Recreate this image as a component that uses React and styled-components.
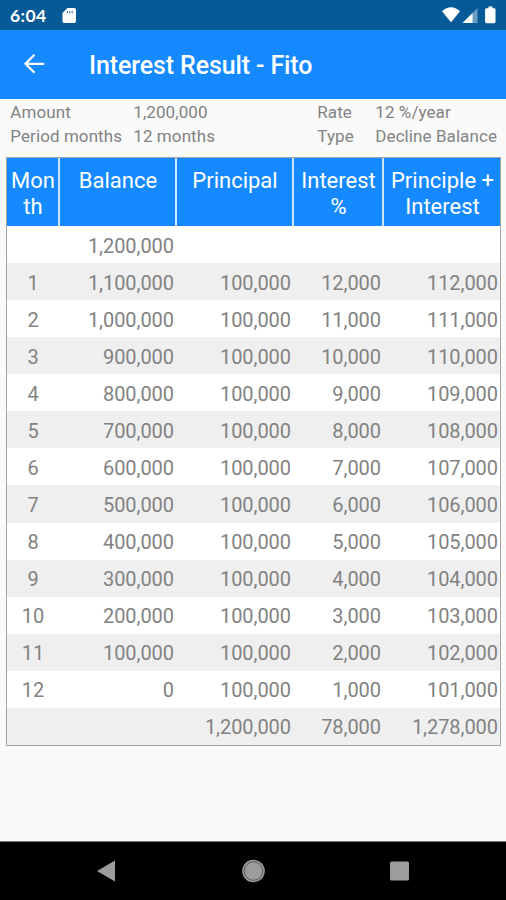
import React from 'react';
import styled, { createGlobalStyle } from 'styled-components';

const GlobalStyle = createGlobalStyle`
  * {
    box-sizing: border-box;
  }

  body {
    margin: 0;
    background-color: #fafafa;
    font-family: Roboto, sans-serif;
  }
`;

const Screen = styled.div`
  display: flex;
  flex-direction: column;
  width: 506px;
  height: 900px;
  overflow: hidden;
  background-color: #fafafa;
`;

const StatusBar = styled.div`
  display: flex;
  align-items: center;
  height: 30px;
  flex-shrink: 0;
  padding: 0 8px 0 10px;
  background-color: #075a98;
  color: #fff;

  svg {
    display: block;
    fill: #fff;
  }
`;

const Clock = styled.span`
  width: 52px;
  padding-top: 1px;
  font-family: Lato, sans-serif;
  font-size: 17.5px;
  font-weight: 700;
  line-height: 20px;
  letter-spacing: 0.4px;
`;

const StatusIcons = styled.div`
  display: flex;
  align-items: center;
  margin-left: auto;
`;

const AppBar = styled.header`
  display: flex;
  align-items: center;
  height: 68.5px;
  flex-shrink: 0;
  padding: 0 22px;
  background-color: #1589ff;
  color: #fff;
`;

const BackButton = styled.button`
  display: flex;
  width: 67px;
  padding: 0;
  border: 0;
  background: none;
  color: inherit;
`;

const Title = styled.h1`
  margin: 0;
  padding-top: 4px;
  font-size: 25px;
  font-weight: 500;
  line-height: 30px;
  letter-spacing: -0.12px;
  white-space: nowrap;
`;

const Summary = styled.dl`
  display: grid;
  grid-template-columns: 123px 184px 58px 1fr;
  grid-auto-rows: 24px;
  height: 58.5px;
  flex-shrink: 0;
  margin: 0;
  padding: 1px 0 0 10.3px;
  color: #828282;
  font-size: 17px;
  line-height: 24px;
  letter-spacing: 0.08px;
  white-space: nowrap;

  dt,
  dd {
    margin: 0;
  }
`;

const Table = styled.div`
  width: 495px;
  height: 589px;
  flex-shrink: 0;
  margin-left: 6px;
  border: 1px solid #a3a3a3;
  background-color: #fff;
`;

const columns = '53px 117px 117px 90px 116px';

const HeaderRow = styled.div`
  display: grid;
  grid-template-columns: ${columns};
  height: 68px;
  background-color: #1589ff;
`;

const HeaderCell = styled.div`
  padding: 10px 0 0 1px;
  border-right: ${({ $last }) => ($last ? '0' : '2px solid #cde4ff')};
  color: #fff;
  font-size: 22px;
  line-height: 26px;
  text-align: center;
  word-break: ${({ $split }) => ($split ? 'break-all' : 'normal')};
`;

const Row = styled.div`
  display: grid;
  grid-template-columns: ${columns};
  align-items: center;
  height: 37.07px;
  padding-top: 2px;
  background-color: ${({ $striped }) => ($striped ? '#efefef' : '#fff')};
`;

const Cell = styled.div`
  padding-right: ${({ $center, $last }) => ($center ? '1px' : $last ? '2px' : '3px')};
  color: #828282;
  font-size: 20px;
  line-height: 24px;
  letter-spacing: -0.05px;
  text-align: ${({ $center }) => ($center ? 'center' : 'right')};
`;

const NavBar = styled.nav`
  display: flex;
  align-items: center;
  justify-content: space-between;
  height: 59px;
  flex-shrink: 0;
  margin-top: auto;
  padding: 0 96px;
  border-top: 1px solid #777;
  background-color: #000;

  svg {
    display: block;
    fill: #9c9c9c;
  }
`;

const headers = ['Month', 'Balance', 'Principal', 'Interest %', 'Principle + Interest'];

const format = value => value.toLocaleString('en-US');

const AMOUNT = 1200000;
const MONTHS = 12;
const payment = AMOUNT / MONTHS;

const schedule = Array.from({ length: MONTHS }, (_, i) => {
  const interest = (AMOUNT - payment * i) * 0.01;
  return [
    i + 1,
    format(AMOUNT - payment * (i + 1)),
    format(payment),
    format(interest),
    format(payment + interest),
  ];
});

const rows = [
  ['', format(AMOUNT), '', '', ''],
  ...schedule,
  ['', '', format(AMOUNT), '78,000', '1,278,000'],
];

const App = () => (
  <>
    <GlobalStyle />
    <Screen>
      <StatusBar>
        <Clock>6:04</Clock>
        <svg width="15" height="17" viewBox="0 0 15 17">
          <path
            fillRule="evenodd"
            d="M5.5 1H12.3Q14 1 14 2.6V14.2Q14 16 12.3 16H2.3Q.5 16 .5 14.2V6ZM4.9 4v2.2h.9V4ZM7.3 4v2.2h.9V4ZM9.7 4v2.2h.9V4Z"
          />
        </svg>
        <StatusIcons>
          <svg width="58" height="20" viewBox="0 0 58 20">
            <path d="M2 6.2Q11 -1.8 20 6.2L11 17.3Z" />
            <path d="M22.5 18 37.5 3V18Z" opacity="0.4" />
            <path d="M22.5 18 32.5 8V18Z" />
            <path d="M48.5 1.5h4v1.7h1.6q1.4 0 1.4 1.4V16.5q0 1.7-1.4 1.7h-7.6q-1.4 0-1.4-1.7V4.6q0-1.4 1.4-1.4h2Z" />
          </svg>
        </StatusIcons>
      </StatusBar>

      <AppBar>
        <BackButton aria-label="Back">
          <svg
            width="24"
            height="24"
            viewBox="0 0 24 24"
            fill="none"
            stroke="currentColor"
            strokeWidth="2.2">
            <path d="M22.2 11.8H3.7M12.5 2.8 3.5 11.8l9 9" />
          </svg>
        </BackButton>
        <Title>Interest Result - Fito</Title>
      </AppBar>

      <Summary>
        <dt>Amount</dt>
        <dd>1,200,000</dd>
        <dt>Rate</dt>
        <dd>12 %/year</dd>
        <dt>Period months</dt>
        <dd>12 months</dd>
        <dt>Type</dt>
        <dd>Decline Balance</dd>
      </Summary>

      <Table>
        <HeaderRow>
          {headers.map((header, i) => (
            <HeaderCell key={header} $split={i === 0} $last={i === headers.length - 1}>
              {header}
            </HeaderCell>
          ))}
        </HeaderRow>
        {rows.map((row, i) => (
          <Row key={i} $striped={i % 2 === 1}>
            {row.map((value, j) => (
              <Cell key={j} $center={j === 0} $last={j === row.length - 1}>
                {value}
              </Cell>
            ))}
          </Row>
        ))}
      </Table>

      <NavBar>
        <svg width="20" height="22" viewBox="0 0 20 22">
          <path d="M1 11 19 .5V21.5Z" />
        </svg>
        <svg width="24" height="24" viewBox="0 0 24 24">
          <circle cx="12.5" cy="12" r="11.3" />
          <circle cx="12.5" cy="12" r="9.3" fill="none" stroke="#444" strokeWidth="0.8" />
        </svg>
        <svg width="20" height="20" viewBox="0 0 20 20">
          <rect x="0" y="0.5" width="19" height="19" rx="1.5" />
        </svg>
      </NavBar>
    </Screen>
  </>
);

export default App;
